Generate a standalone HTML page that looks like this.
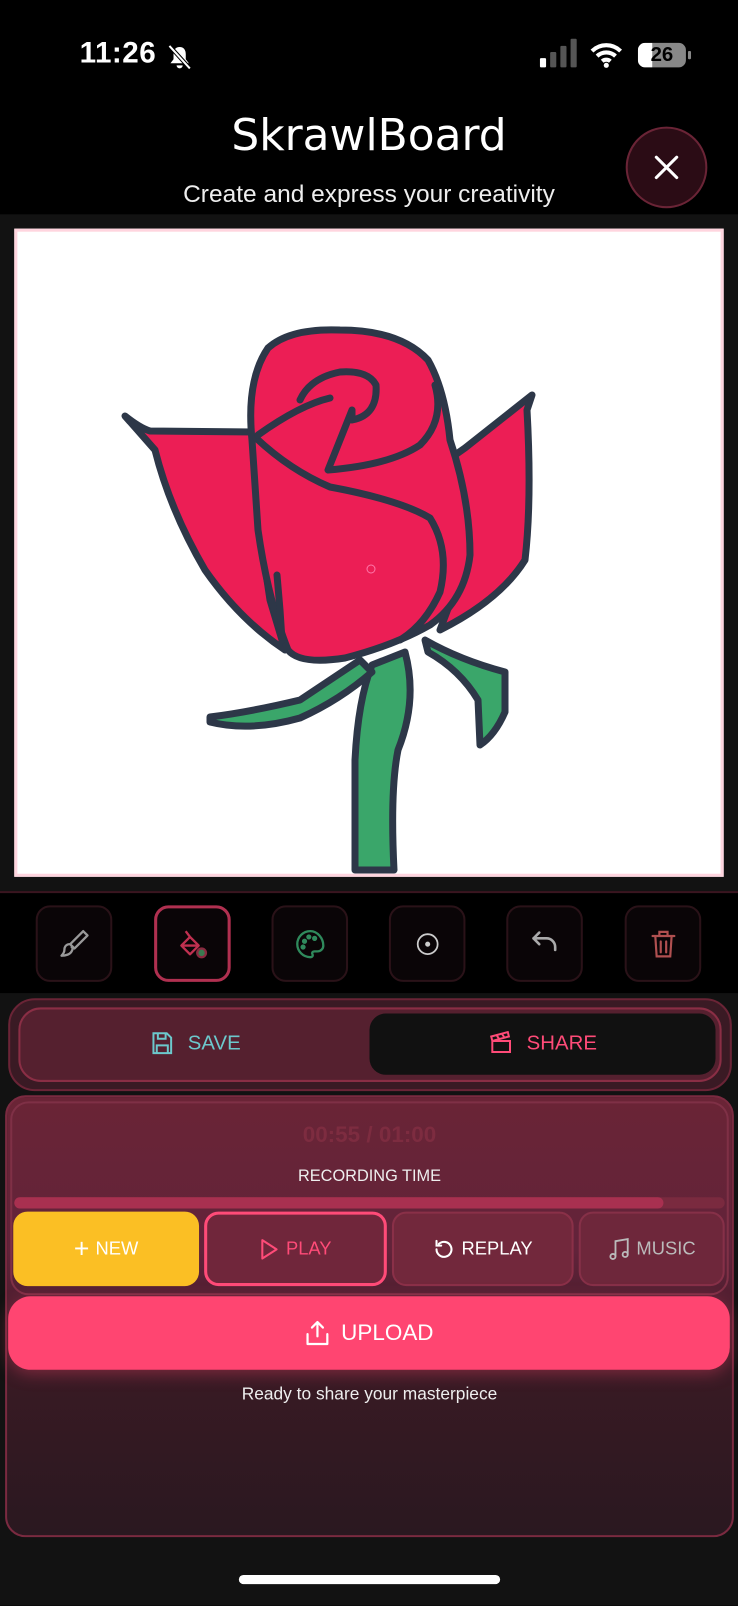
<!DOCTYPE html>
<html><head><meta charset="utf-8"><style>
*{margin:0;padding:0;box-sizing:border-box}
body{width:738px;height:1600px;background:#000;font-family:"Liberation Sans",sans-serif;position:relative;overflow:hidden;color:#fff}
#w{position:absolute;left:0;top:0;width:723px;height:1568px;transform:scale(1.0207);transform-origin:0 0}
.abs{position:absolute}
.tb{position:absolute;top:887px;width:75px;height:75px;border-radius:14px;border:2px solid #2a1218;background:#0a0507;display:flex;align-items:center;justify-content:center}
.btn{position:absolute;top:1187px;height:73px;border-radius:14px;display:flex;align-items:center;justify-content:center;font-size:18px;gap:6px}
</style></head><body>
<div id="w">
<div class="abs" style="left:78px;top:36px;font-size:29px;font-weight:bold;letter-spacing:0.5px">11:26</div>
<svg class="abs" style="left:162px;top:42px" width="28" height="28" viewBox="0 0 28 28"><path d="M14 4c-4 0-6 3-6 7v5l-3 4h18l-3-4v-5c0-4-2-7-6-7zM11 22a3 3 0 0 0 6 0" fill="#fff"/><path d="M4 3l20 22" stroke="#000" stroke-width="4"/><path d="M4 3l20 22" stroke="#fff" stroke-width="2"/></svg>
<div class="abs" style="left:529px;top:57px;width:6px;height:9px;background:#fff;border-radius:1px"></div>
<div class="abs" style="left:539px;top:51px;width:6px;height:15px;background:#555;border-radius:1px"></div>
<div class="abs" style="left:549px;top:45px;width:6px;height:21px;background:#555;border-radius:1px"></div>
<div class="abs" style="left:559px;top:38px;width:6px;height:28px;background:#555;border-radius:1px"></div>
<svg class="abs" style="left:578px;top:41px" width="32" height="26" viewBox="0 0 32 26"><path d="M2 9a20 20 0 0 1 28 0M7 14a13 13 0 0 1 18 0M12 19a6 6 0 0 1 8 0" stroke="#fff" stroke-width="4" fill="none"/><circle cx="16" cy="23" r="2.5" fill="#fff"/></svg>
<div class="abs" style="left:625px;top:42px;width:47px;height:24px;border-radius:7px;background:#888;overflow:hidden"><div style="width:14px;height:24px;background:#fff"></div></div>
<div class="abs" style="left:625px;top:42px;width:47px;height:24px;color:#000;font-weight:bold;font-size:20px;text-align:center;line-height:24px">26</div>
<div class="abs" style="left:674px;top:50px;width:3px;height:8px;background:#888;border-radius:1px"></div>

<div class="abs" style="left:0;top:108px;width:723px;text-align:center;font-size:43px;font-family:'Comic Sans MS','DejaVu Sans',sans-serif">SkrawlBoard</div>
<div class="abs" style="left:0;top:177px;width:723px;text-align:center;font-size:24px;font-family:'Liberation Sans',sans-serif;color:#eee">Create and express your creativity</div>
<div class="abs" style="left:613px;top:124px;width:80px;height:80px;border-radius:50%;background:#2b0c15;border:2px solid #6a2436;display:flex;align-items:center;justify-content:center"><svg width="26" height="26" viewBox="0 0 26 26"><path d="M3 3l20 20M23 3L3 23" stroke="#fff" stroke-width="3" stroke-linecap="round"/></svg></div>

<div class="abs" style="left:0;top:210px;width:723px;height:665px;background:#121212"></div>
<div class="abs" style="left:14px;top:224px;width:695px;height:635px;background:#fff;border:3px solid #ffd5df"></div>

<div class="abs" style="left:0;top:873px;width:723px;height:100px;background:#000;border-top:2px solid #3a1620"></div>
<div class="tb" style="left:35px"><svg width="34" height="34" viewBox="0 0 24 24" fill="none" stroke="#999" stroke-width="1.6" stroke-linecap="round" stroke-linejoin="round"><path d="M18 3l3 3-9 9-3-3z"/><path d="M9 12c-3 0-4 2-4 4s-1 3-2 4c3 0 6-1 7-3s1-2 0-3"/></svg></div>
<div class="tb" style="left:151px;border:3px solid #b03050"><svg width="34" height="34" viewBox="0 0 24 24" fill="none" stroke="#c03050" stroke-width="1.6" stroke-linejoin="round"><path d="M7 3l3 4M4 13l6-6 6 6-6 6z M4 13h12"/><circle cx="18" cy="18" r="3" fill="#3a7a50" stroke="#8a2a40"/></svg></div>
<div class="tb" style="left:266px"><svg width="34" height="34" viewBox="0 0 24 24" fill="none" stroke="#2f8a5c" stroke-width="1.6"><path d="M12 3a9 9 0 1 0 0 18c1.5 0 2-1 1.5-2s0-2 1.5-2h2a4 4 0 0 0 4-4c0-5-4-10-9-10z"/><circle cx="8" cy="10" r="1" fill="#2f8a5c"/><circle cx="11" cy="7" r="1" fill="#2f8a5c"/><circle cx="15" cy="8" r="1" fill="#2f8a5c"/><circle cx="7" cy="14" r="1" fill="#2f8a5c"/></svg></div>
<div class="tb" style="left:381px"><svg width="26" height="26" viewBox="0 0 24 24" fill="none" stroke="#ccc" stroke-width="1.6"><circle cx="12" cy="12" r="9"/><circle cx="12" cy="12" r="1.5" fill="#ccc"/></svg></div>
<div class="tb" style="left:496px"><svg width="34" height="34" viewBox="0 0 24 24" fill="none" stroke="#aaa" stroke-width="1.8" stroke-linecap="round" stroke-linejoin="round"><path d="M4 8h9a6 6 0 0 1 6 6v2M4 8l4-4M4 8l4 4"/></svg></div>
<div class="tb" style="left:612px"><svg width="32" height="32" viewBox="0 0 24 24" fill="none" stroke="#b05050" stroke-width="1.6" stroke-linecap="round"><path d="M4 6h16M9 6V3h6v3M6 6l1 15h10l1-15M10 10v8M14 10v8"/></svg></div>

<div class="abs" style="left:0;top:973px;width:723px;height:600px;background:#121212"></div>
<div class="abs" style="left:8px;top:978px;width:709px;height:91px;border-radius:26px;background:#3a1a24;border:2px solid #6a2436"></div>
<div class="abs" style="left:18px;top:987px;width:689px;height:73px;border-radius:22px;background:#55202f;border:2px solid #8a2e45"></div>
<div class="abs" style="left:362px;top:993px;width:339px;height:60px;border-radius:16px;background:#111"></div>
<div class="abs" style="left:146px;top:1009px;display:flex;align-items:center;gap:12px;color:#6cc8cc;font-size:20px"><svg width="26" height="26" viewBox="0 0 24 24" fill="none" stroke="#6cc8cc" stroke-width="1.8"><path d="M4 3h12l4 4v14H4z M8 3v5h7V3 M7 21v-7h10v7"/></svg>SAVE</div>
<div class="abs" style="left:478px;top:1009px;display:flex;align-items:center;gap:12px;color:#ff4b78;font-size:20px"><svg width="26" height="26" viewBox="0 0 24 24" fill="none" stroke="#ff4b78" stroke-width="1.8"><path d="M4 10h16v10H4z M4 10l-1-4 15-4 1 4z M8 5l2 3M13 4l2 3"/></svg>SHARE</div>

<div class="abs" style="left:5px;top:1073px;width:714px;height:433px;border-radius:20px;background:linear-gradient(#6a2436 0%,#62233a 35%,#3a1a24 60%,#2a1820 100%);border:2px solid #7a2a40"></div>
<div class="abs" style="left:10px;top:1079px;width:704px;height:190px;border-radius:18px;border:2px solid #7f3046"></div>
<div class="abs" style="left:0;top:1099px;width:724px;text-align:center;font-size:22px;font-weight:bold;color:#7d2c40">00:55 / 01:00</div>
<div class="abs" style="left:0;top:1144px;width:724px;text-align:center;font-size:16px;color:#eee">RECORDING TIME</div>
<div class="abs" style="left:14px;top:1173px;width:696px;height:11px;border-radius:6px;background:#7a2a3f"><div style="width:636px;height:11px;border-radius:6px;background:#a83050"></div></div>
<div class="btn" style="left:13px;width:182px;background:#fbbf24;color:#fff"><span style="font-size:26px">+</span>NEW</div>
<div class="btn" style="left:200px;width:179px;background:#70263b;border:3px solid #ff4b78;color:#ff4b78"><svg width="20" height="22" viewBox="0 0 20 22"><path d="M3 2l14 9-14 9z" fill="none" stroke="#ff4b78" stroke-width="2" stroke-linejoin="round"/></svg>PLAY</div>
<div class="btn" style="left:384px;width:178px;background:#72283c;border:2px solid #8a3048;color:#fff"><svg width="22" height="22" viewBox="0 0 24 24" fill="none" stroke="#fff" stroke-width="2.2" stroke-linecap="round"><path d="M4 12a8 8 0 1 0 2.5-5.8M4 3v5h5"/></svg>REPLAY</div>
<div class="btn" style="left:567px;width:143px;background:#6e273b;border:2px solid #863048;color:#bbb"><svg width="22" height="24" viewBox="0 0 22 24" fill="none" stroke="#bbb" stroke-width="1.8"><path d="M7 19V4l12-2v15"/><circle cx="4.5" cy="19" r="2.5"/><circle cx="16.5" cy="17" r="2.5"/></svg>MUSIC</div>
<div class="abs" style="left:8px;top:1270px;width:707px;height:72px;border-radius:22px;background:#ff4571;display:flex;align-items:center;justify-content:center;gap:10px;font-size:22px;color:#fff;box-shadow:0 4px 16px rgba(255,69,113,0.35)"><svg width="26" height="28" viewBox="0 0 24 26" fill="none" stroke="#fff" stroke-width="2" stroke-linecap="round" stroke-linejoin="round"><path d="M12 16V3M7 8l5-5 5 5M3 14v9h18v-9"/></svg>UPLOAD</div>
<div class="abs" style="left:0;top:1356px;width:724px;text-align:center;font-size:17px;color:#eee">Ready to share your masterpiece</div>
<div class="abs" style="left:234px;top:1543px;width:256px;height:9px;border-radius:5px;background:#fff"></div>
</div>
<svg class="abs" style="left:0;top:0" width="738" height="880" viewBox="0 0 738 880">
<g stroke="#2d3748" stroke-width="7" stroke-linejoin="round" stroke-linecap="round">
<path d="M125 416 Q140 428 150 431 L255 432 L258 520 L270 600 L285 650 Q240 620 205 570 Q170 510 155 450 Z" fill="#ec1e55"/>
<path d="M532 395 L465 448 L455 455 L460 520 L455 590 L440 630 Q500 600 525 560 Q532 500 527 410 Z" fill="#ec1e55"/>
<path d="M355 870 L355 760 Q358 700 372 665 L405 652 Q418 700 398 750 Q390 790 394 870 Z" fill="#3aa66a"/>
<path d="M210 717 Q250 712 300 700 Q330 680 360 660 L372 672 Q340 700 300 718 Q250 732 210 722 Z" fill="#3aa66a"/>
<path d="M425 640 Q460 660 505 672 L505 712 Q495 735 480 745 L478 700 Q460 670 428 652 Z" fill="#3aa66a"/>
<path d="M252 440 Q246 380 268 348 Q290 328 340 330 Q400 330 428 360 Q445 390 450 440 Q470 500 470 555 Q465 600 430 625 Q395 645 345 658 Q300 665 288 650 Q268 600 258 530 Z" fill="#ec1e55"/>
<path d="M256 438 Q290 470 330 487 Q400 500 430 518 Q450 550 440 592 Q425 625 400 640" fill="none"/>
<path d="M258 435 Q300 405 330 398 M300 400 Q310 378 340 372 Q368 370 376 385 Q378 415 352 420 L352 410 M352 410 L328 470 Q390 465 420 445 Q445 420 435 385" fill="none"/>
<path d="M277 575 L280 610 L282 640" fill="none"/>
</g>
<circle cx="371" cy="569" r="4" fill="none" stroke="#f7a" stroke-width="1"/>
</svg>
</body></html>
